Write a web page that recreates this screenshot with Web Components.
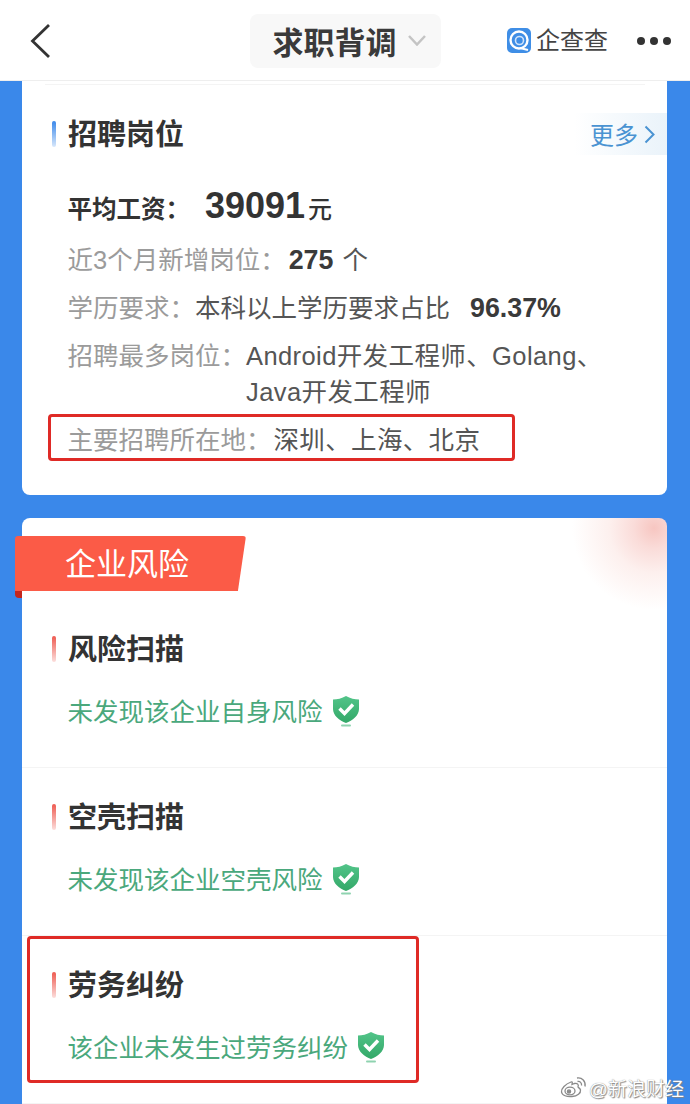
<!DOCTYPE html>
<html lang="zh">
<head>
<meta charset="utf-8">
<title>求职背调</title>
<style>
  html, body { margin: 0; padding: 0; }
  body {
    width: 690px;
    height: 1104px;
    overflow: hidden;
    position: relative;
    background: #3a88ea;
    font-family: "Liberation Sans", "Noto Sans CJK SC", sans-serif;
  }
  .wide { letter-spacing: .4px; }
  .loc { letter-spacing: .35px; margin-left: 2px; }
  .unit-gap { margin-left: 2px; }
</style>
</head>
<body>
  <app-header></app-header>

  <info-card class="jobs">
    <section-title more>招聘岗位</section-title>
    <salary-row></salary-row>
    <info-row label="近3个月新增岗位："><b class="near">275</b>&nbsp;<span class="unit-gap">个</span></info-row>
    <info-row label="学历要求：">本科以上学历要求占比<b class="gap">96.37%</b></info-row>
    <info-row label="招聘最多岗位："><span class="wide">Android开发工程师、Golang、Java开发工程师</span></info-row>
    <info-row label="主要招聘所在地："><span class="loc">深圳、上海、北京</span></info-row>
  </info-card>

  <risk-card>
    <risk-row heading="风险扫描">未发现该企业自身风险</risk-row>
    <risk-row heading="空壳扫描">未发现该企业空壳风险</risk-row>
    <risk-row heading="劳务纠纷">该企业未发生过劳务纠纷</risk-row>
  </risk-card>

  <mark-box style="left:48px;top:414px;width:467px;height:47px"></mark-box>
  <mark-box style="left:27px;top:936px;width:392px;height:147px"></mark-box>
  <weibo-mark></weibo-mark>

<script>
const FONT = '"Liberation Sans", "Noto Sans CJK SC", sans-serif';

class AppHeader extends HTMLElement {
  constructor() {
    super();
    this.shadowDOM = this.attachShadow({ mode: "open" });
    this.shadowDOM.innerHTML = `
      <style>
        :host {
          display: grid;
          grid-template-columns: 1fr auto 1fr;
          align-items: center;
          height: 79px;
          padding-top: 1px;
          background: #fff;
          border-bottom: 1px solid #eeeeee;
          font-family: ${FONT};
          color: #333;
        }
        .back { margin-left: 29px; display: block; }
        .pill {
          display: flex;
          align-items: center;
          gap: 11px;
          height: 54px;
          padding: 0 15px 0 23px;
          border-radius: 8px;
          background: #f8f8f8;
          font-size: 31px;
          font-weight: 700;
          color: #3a3a3a;
        }
        .right {
          display: flex;
          align-items: center;
          justify-content: flex-end;
          padding-right: 19px;
        }
        .brand { font-size: 24px; line-height: 30px; margin-left: 5px; color: #444; }
        .dots { display: flex; gap: 5px; margin-left: 29px; }
        .dots i { width: 8px; height: 8px; border-radius: 50%; background: #333; }
      </style>
      <svg class="back" width="24" height="36" viewBox="0 0 24 36" fill="none">
        <path d="M20 2 L3.500 18 L20 34" stroke="#333" stroke-width="2.800"/>
      </svg>
      <div class="pill">
        <span>求职背调</span>
        <svg width="18" height="11" viewBox="0 0 18 11" fill="none">
          <path d="M1 1 L9 9.500 L17 1" stroke="#c4c4c4" stroke-width="2.500"/>
        </svg>
      </div>
      <div class="right">
        <svg width="24" height="25" viewBox="0 0 24 25">
          <rect width="24" height="25" rx="5" fill="#3f8ee6"/>
          <circle cx="12" cy="12" r="8.500" fill="none" stroke="#fff" stroke-width="2.400"/>
          <circle cx="12.500" cy="12.500" r="4" fill="none" stroke="#cfe3fa" stroke-width="1.600"/>
          <path d="M13 20 L21 22" stroke="#fff" stroke-width="2.200"/>
        </svg>
        <span class="brand">企查查</span>
        <div class="dots"><i></i><i></i><i></i></div>
      </div>`;
  }
}

class InfoCard extends HTMLElement {
  constructor() {
    super();
    this.shadowDOM = this.attachShadow({ mode: "open" });
    this.shadowDOM.innerHTML = `
      <style>
        :host {
          display: block;
          margin: 0 23px 0 22px;
          padding: 32px 0 31px;
          background: linear-gradient(#f4f4f4, #f4f4f4) no-repeat center 3px / 600px 1px, #fff;
          border-radius: 0 0 8px 8px;
          font-family: ${FONT};
        }
      </style>
      <slot></slot>`;
  }
}

class SectionTitle extends HTMLElement {
  constructor() {
    super();
    this.shadowDOM = this.attachShadow({ mode: "open" });
  }

  connectedCallback() {
    const bar = this.getAttribute("bar") || "#3a88ea";
    const more = this.hasAttribute("more") ? `
      <div class="more">
        <span class="up">更多</span>
        <svg width="11" height="19" viewBox="0 0 11 19" fill="none">
          <path d="M1.500 1.500 L9.500 9.500 L1.500 17.500" stroke="#4a93d2" stroke-width="2"/>
        </svg>
      </div>` : "";
    this.shadowDOM.innerHTML = `
      <style>
        :host {
          display: flex;
          align-items: center;
          height: 42px;
          padding-left: 30px;
        }
        .bar {
          width: 4px;
          height: 26px;
          margin-right: 12px;
          border-radius: 2px;
          background: linear-gradient(${bar}, ${bar}33);
        }
        .text {
          margin-bottom: 4px;
          font-size: 29px;
          font-weight: 700;
          color: #333;
        }
        .more {
          margin-left: auto;
          display: flex;
          align-items: center;
          gap: 6px;
          height: 42px;
          padding: 0 12px 0 16px;
          background: linear-gradient(90deg, #ffffff, #eaf3fa);
          color: #4a93d2;
          font-size: 24px;
        }
        .up { margin-bottom: 2px; }
      </style>
      <span class="bar"></span>
      <span class="text"><slot></slot></span>
      ${more}`;
  }
}

class SalaryRow extends HTMLElement {
  constructor() {
    super();
    this.shadowDOM = this.attachShadow({ mode: "open" });
    this.shadowDOM.innerHTML = `
      <style>
        :host {
          display: flex;
          align-items: baseline;
          height: 48px;
          line-height: 48px;
          margin: 27px 0 6px;
          padding-left: 45.500px;
          color: #333;
        }
        .label { font-size: 24.500px; font-weight: 700; width: 137.500px; }
        .num { font-size: 36px; font-weight: 700; }
        .unit { font-size: 24px; font-weight: 500; margin-left: 3px; }
      </style>
      <span class="label">平均工资：</span>
      <span class="num">39091</span>
      <span class="unit">元</span>`;
  }
}

class InfoRow extends HTMLElement {
  constructor() {
    super();
    this.shadowDOM = this.attachShadow({ mode: "open" });
  }

  connectedCallback() {
    this.shadowDOM.innerHTML = `
      <style>
        :host {
          display: flex;
          padding: 6px 60px 6px 45.500px;
          line-height: 36px;
          font-size: 25.500px;
          color: #555;
        }
        .label { flex: none; color: #9b9b9b; }
        .value { flex: 1; min-width: 0; }
        ::slotted(b) { color: #3a3a3a; font-weight: 700; font-size: 26.800px; }
        ::slotted(b.gap) { margin-left: 20px; }
        ::slotted(b.near) { margin-left: 3px; }
      </style>
      <span class="label">${this.getAttribute("label")}</span>
      <span class="value"><slot></slot></span>`;
  }
}

class RiskCard extends HTMLElement {
  constructor() {
    super();
    this.shadowDOM = this.attachShadow({ mode: "open" });
    this.shadowDOM.innerHTML = `
      <style>
        :host {
          display: block;
          margin: 23px 23px 0 22px;
          padding: 18px 0 30px;
          background:
            radial-gradient(circle 82px at 98% 10px, #f7c6c1 0%, #fadcd9 25%, #fdf0ee 55%, rgba(255,255,255,0) 100%),
            #fff;
          background-repeat: no-repeat;
          border-radius: 8px;
          font-family: ${FONT};
        }
        .wrap { position: relative; margin-left: -7px; width: 231px; height: 64px; }
        .tag {
          height: 55px;
          padding-left: 50px;
          line-height: 57px;
          background: #fb5b47;
          color: #fff;
          font-size: 31px;
          border-radius: 3px 3px 0 0;
          clip-path: polygon(0 0, 100% 0, 96.500% 100%, 0 100%);
        }
        .fold {
          position: absolute;
          left: 0;
          top: 55px;
          width: 7px;
          height: 7px;
          background: #c4261c;
          border-radius: 0 0 0 4px;
        }
      </style>
      <div class="wrap"><div class="tag">企业风险</div><span class="fold"></span></div>
      <slot></slot>`;
  }
}

class RiskRow extends HTMLElement {
  constructor() {
    super();
    this.shadowDOM = this.attachShadow({ mode: "open" });
  }

  connectedCallback() {
    this.shadowDOM.innerHTML = `
      <style>
        :host {
          display: block;
          box-sizing: border-box;
          height: 168px;
          padding-top: 28px;
          border-bottom: 1px solid #f4f4f4;
        }
        .line {
          display: flex;
          align-items: center;
          gap: 9px;
          height: 34px;
          margin-top: 24px;
          padding-left: 45.500px;
          color: #4aa87c;
          font-size: 25.500px;
        }
        .line span { margin-bottom: 4px; }
        .shield { flex: none; }
      </style>
      <section-title bar="#ee5a50">${this.getAttribute("heading")}</section-title>
      <div class="line">
        <span><slot></slot></span>
        <svg class="shield" width="28" height="32" viewBox="0 0 28 32">
          <defs>
            <linearGradient id="g" x1="0" y1="0" x2="0" y2="1">
              <stop offset="0" stop-color="#52c489"/>
              <stop offset="1" stop-color="#33a868"/>
            </linearGradient>
          </defs>
          <path d="M14 1 C18 3.500 23 4.500 27 4.500 L27 14 C27 20.500 20.500 25.500 14 28 C7.500 25.500 1 20.500 1 14 L1 4.500 C5 4.500 10 3.500 14 1 Z" fill="url(#g)"/>
          <path d="M7.500 13.500 L12.500 18.500 L21 9.500" fill="none" stroke="#fff" stroke-width="3.400"/>
          <rect x="9" y="29.500" width="10" height="2" rx="1" fill="#8fd3b0"/>
        </svg>
      </div>`;
  }
}

class MarkBox extends HTMLElement {
  constructor() {
    super();
    this.shadowDOM = this.attachShadow({ mode: "open" });
    this.shadowDOM.innerHTML = `
      <style>
        :host {
          position: absolute;
          box-sizing: border-box;
          border: 3px solid #df2a26;
          border-radius: 4px;
        }
      </style>`;
  }
}

class WeiboMark extends HTMLElement {
  constructor() {
    super();
    this.shadowDOM = this.attachShadow({ mode: "open" });
    this.shadowDOM.innerHTML = `
      <style>
        :host {
          position: absolute;
          right: 6px;
          top: 1074px;
          display: flex;
          align-items: center;
          gap: 2px;
          height: 26px;
          font-family: ${FONT};
          font-size: 19px;
          color: #fff;
          text-shadow: 0 0 1px #777, 1px 1px 1px #888;
        }
      </style>
      <svg width="27" height="22" viewBox="0 0 27 22" fill="none" stroke="#8a8a8a" stroke-width="1.300">
        <path d="M11 6 C5.500 8 1 12.500 1.500 16 C2 19.500 7 21 12 20.500 C17.500 20 21 17 20.500 14 C20 12 18 11.500 18 11 C19 8.500 17.500 7 14.500 7.500 L12 8.500 C12.500 6 12.500 5.500 11 6 Z" fill="#fff"/>
        <ellipse cx="10" cy="15" rx="5" ry="3.800" fill="#fff"/>
        <circle cx="9" cy="15.500" r="1.600" fill="#8a8a8a"/>
        <path d="M17 2 C22 1 26 5.500 25 10.500"/>
        <path d="M17.500 5.500 C20 5 22 7 21.500 9.500"/>
      </svg>
      <span>@新浪财经</span>`;
  }
}

customElements.define("app-header", AppHeader);
customElements.define("info-card", InfoCard);
customElements.define("section-title", SectionTitle);
customElements.define("salary-row", SalaryRow);
customElements.define("info-row", InfoRow);
customElements.define("risk-card", RiskCard);
customElements.define("risk-row", RiskRow);
customElements.define("mark-box", MarkBox);
customElements.define("weibo-mark", WeiboMark);
</script>
</body>
</html>
